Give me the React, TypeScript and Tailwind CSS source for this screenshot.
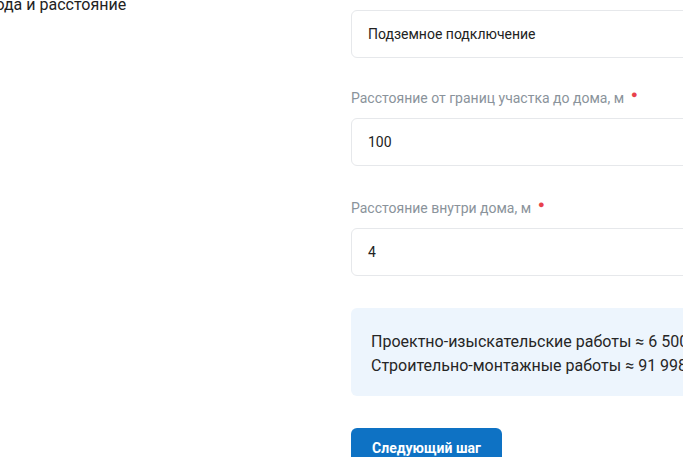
import React from 'react'

// Одно поле формы: подпись с обязательной звёздочкой + инпут
const Field = ({ label, value, className = '' }: { label?: string; value: string; className?: string }) => (
  <div className={className}>
    {label && (
      <div className="mb-[10px] flex h-5 items-center text-sm leading-5 text-[#8a939b]">
        {label}
        <span className="ml-[7px] -mt-2 text-[11px] leading-none text-[#e8414b]">●</span>
      </div>
    )}
    <div className="flex h-12 w-[420px] items-center rounded-md border border-[#e6e8eb] bg-white px-4 text-sm text-[#222]">
      {value}
    </div>
  </div>
)

export default function App() {
  return (
    <div className="h-[457px] w-[683px] overflow-hidden bg-white font-['Roboto',sans-serif]">
      <div className="-mt-[22px] flex">
        {/* Левая колонка с заголовком шага */}
        <div className="w-[351px] shrink-0 pt-[15px]">
          <h3 className="-ml-[82px] whitespace-nowrap text-base leading-6 text-[#222]">
            Способ ввода и расстояние
          </h3>
        </div>

        {/* Правая колонка с полями */}
        <div className="shrink-0">
          <Field className="pt-[2px]" label="Тип подключения" value="Подземное подключение" />
          <Field className="mt-[30px]" label="Расстояние от границ участка до дома, м" value="100" />
          <Field className="mt-8" label="Расстояние внутри дома, м" value="4" />

          <div className="mt-8 w-[420px] rounded-md bg-[#edf5fd] px-5 pb-[18px] pt-[22px] text-base leading-6 text-[#262626]">
            <div className="whitespace-nowrap">Проектно-изыскательские работы ≈ 6 500 ₽</div>
            <div className="whitespace-nowrap">Строительно-монтажные работы ≈ 91 998 ₽</div>
          </div>

          <button className="mt-8 h-10 w-[151px] rounded-md bg-[#0e72c4] text-sm font-bold text-white">
            Следующий шаг
          </button>
        </div>
      </div>
    </div>
  )
}
